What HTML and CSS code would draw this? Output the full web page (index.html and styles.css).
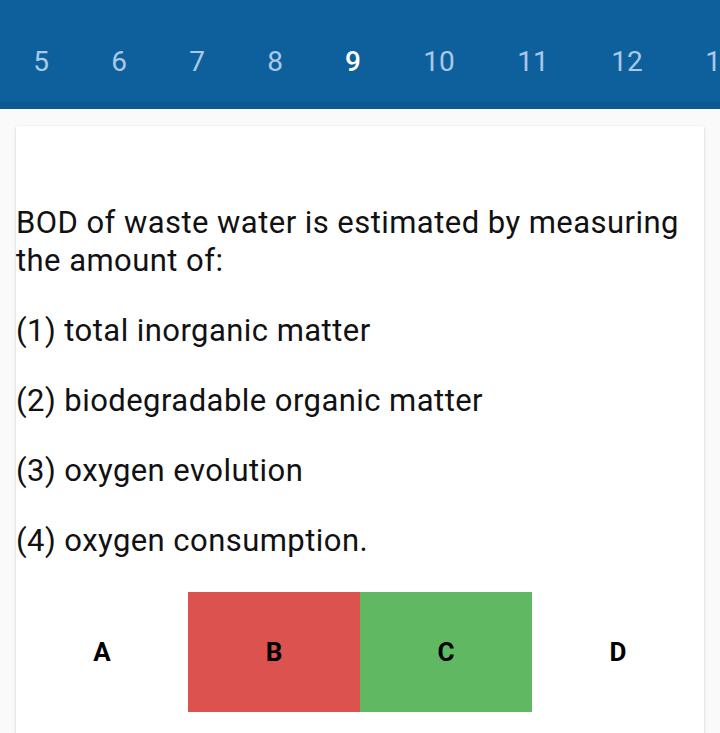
FILE: index.html
```html
<!DOCTYPE html>
<html>
<head>
<meta charset="utf-8">
<link rel="stylesheet" href="styles.css">
</head>
<body>
<header class="tabs">
  <div class="tab">5</div>
  <div class="tab">6</div>
  <div class="tab">7</div>
  <div class="tab">8</div>
  <div class="tab active">9</div>
  <div class="tab wide">10</div>
  <div class="tab wide">11</div>
  <div class="tab wide">12</div>
  <div class="tab wide">13</div>
</header>
<main class="page">
  <section class="card">
    <div class="question">
      <p>BOD of waste water is estimated by measuring the amount of:</p>
      <p>(1) total inorganic matter</p>
      <p>(2) biodegradable organic matter</p>
      <p>(3) oxygen evolution</p>
      <p>(4) oxygen consumption.</p>
    </div>
    <div class="answers">
      <div class="answer">A</div>
      <div class="answer wrong">B</div>
      <div class="answer right">C</div>
      <div class="answer">D</div>
    </div>
  </section>
</main>
</body>
</html>
```
FILE: styles.css
```css
html, body {
  margin: 0;
  padding: 0;
  background: #fafafa;
  font-family: Roboto, "Liberation Sans", sans-serif;
  overflow: hidden;
  height: 733px;
}
.tabs {
  display: flex;
  height: 102px;
  background: #0e609d;
  border-bottom: 7px solid #0b5892;
  white-space: nowrap;
  overflow: hidden;
  padding-left: 2px;
}
.tab {
  flex: 0 0 78px;
  display: flex;
  align-items: center;
  justify-content: center;
  padding-top: 20px;
  box-sizing: border-box;
  height: 102px;
  font-size: 28px;
  color: #a9c9e6;
}
.tab.wide {
  flex-basis: 94px;
}
.tab.active {
  color: #ffffff;
  font-weight: 500;
}
.page {
  padding: 17px 16px 0 16px;
}
.card {
  background: #ffffff;
  box-shadow: 0 1px 3px rgba(0,0,0,0.2);
  border-radius: 2px;
  padding-top: 78px;
  height: 700px;
}
.question {
  font-size: 31px;
  letter-spacing: 0.45px;
  line-height: 38px;
  color: #111;
}
.question p {
  margin: 0 0 32px 0;
}
.answers {
  display: grid;
  grid-template-columns: repeat(4, 1fr);
  height: 120px;
  margin-top: 18px;
}
.answer {
  display: flex;
  align-items: center;
  justify-content: center;
  font-size: 26px;
  font-weight: 700;
  color: #000;
}
.answer.wrong { background: #dc524e; }
.answer.right { background: #60b962; }
```
